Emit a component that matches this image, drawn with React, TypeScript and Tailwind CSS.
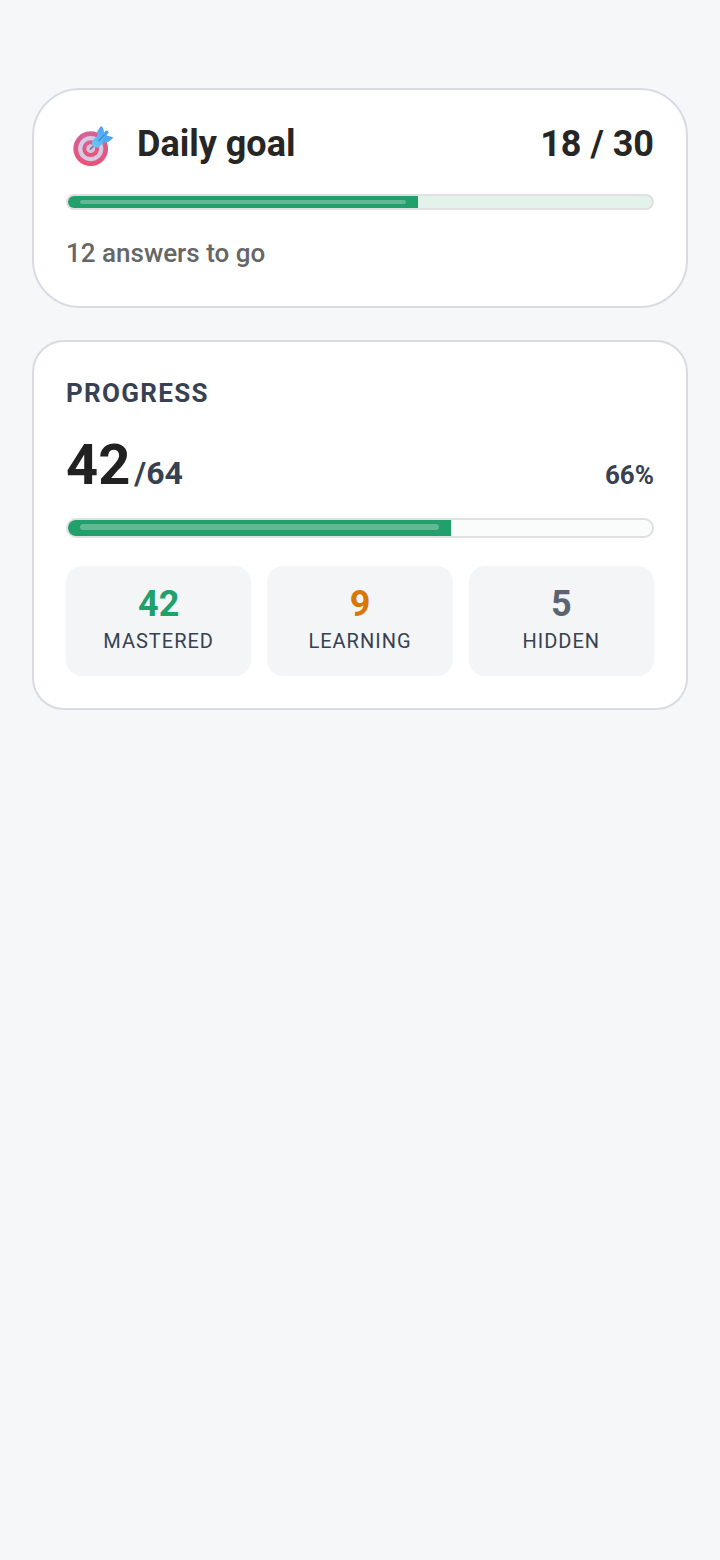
function TargetIcon() {
  return (
    <svg viewBox="0 0 40 40" className="size-10" aria-hidden="true">
      <defs>
        <linearGradient id="ring" x1="0" y1="0" x2="0" y2="1">
          <stop offset="0" stopColor="#d4629a" />
          <stop offset="1" stopColor="#ea5276" />
        </linearGradient>
        <linearGradient id="dart" x1="1" y1="0" x2="0" y2="1">
          <stop offset="0" stopColor="#3f8ff0" />
          <stop offset="1" stopColor="#6ccdf3" />
        </linearGradient>
      </defs>
      <circle cx="17.7" cy="22.7" r="17.4" fill="url(#ring)" />
      <circle cx="17.7" cy="22.7" r="12.6" fill="#d5cbe3" />
      <circle cx="17.7" cy="22.7" r="8.4" fill="url(#ring)" />
      <circle cx="17.7" cy="22.7" r="4.4" fill="#d3c3dc" />
      <path d="M17.5 22.8 21.5 19" stroke="#85799a" strokeWidth="1.8" strokeLinecap="round" />
      <path
        d="M20 14 24.4 9.8 24.2 5.4 27.6.6Q28.6-.3 29.4.9L30.8 4.6 30.8 6.8 32.8 4.8Q34.2 4 35.2 5.2 36 6.4 35 7.6L33.6 9.4 39.2 11Q40.4 11.7 39.4 12.8L35 16.2 30.8 16.4 26.8 20.2Q23.5 22.6 20.5 20.4 17.8 17.2 20 14Z"
        fill="url(#dart)"
      />
      <path d="M25.8 14.6 31.2 9.2" stroke="#3683d8" strokeWidth="1.2" strokeLinecap="round" />
      <path d="M29.6 16.2 33.4 12.2" stroke="#4598e8" strokeWidth="0.9" />
    </svg>
  );
}

type BarProps = { label: string; value: number; max: number; size: "sm" | "md" };

function ProgressBar({ label, value, max, size }: BarProps) {
  const small = size === "sm";
  return (
    <div
      role="progressbar"
      aria-label={label}
      aria-valuenow={value}
      aria-valuemin={0}
      aria-valuemax={max}
      className={`overflow-hidden rounded-full border-2 border-[#e0e0e0] ${
        small ? "h-4 bg-[#e4f2ec]" : "h-5 bg-[#fafcfb]"
      }`}
    >
      <div className="h-full bg-[#22a06b] px-3 pt-1" style={{ width: `${(value / max) * 100}%` }}>
        <div className={`rounded-full bg-[#62b894] ${small ? "h-1" : "h-1.5"}`} />
      </div>
    </div>
  );
}

const stats = [
  { label: "MASTERED", value: 42, color: "text-[#22a06b]" },
  { label: "LEARNING", value: 9, color: "text-[#d97706]" },
  { label: "HIDDEN", value: 5, color: "text-[#5b6472]" },
];

export default function App() {
  return (
    <main className="flex min-h-screen flex-col gap-8 bg-[#f6f7f9] px-8 pt-[88px] pb-8 font-[Roboto,sans-serif] text-[#262626]">
      <section className="rounded-[48px] border-2 border-[#d9dbe3] bg-white p-8">
        <div className="flex items-center justify-between">
          <div className="flex items-center gap-[17px]">
            <span className="flex w-[54px] justify-center pt-1">
              <TargetIcon />
            </span>
            <h2 className="text-4xl/11 font-bold">Daily goal</h2>
          </div>
          <p className="text-4xl/11 font-bold">18 / 30</p>
        </div>
        <div className="mt-7">
          <ProgressBar label="Daily goal" value={18} max={30} size="sm" />
        </div>
        <p className="mt-6 pb-0.5 text-[26px]/[38px] font-medium text-[#666666]">12 answers to go</p>
      </section>

      <section className="rounded-4xl border-2 border-[#d9dbe3] bg-white p-8">
        <h2 className="text-[26px]/[38px] font-bold tracking-[1.3px] text-[#374151]">PROGRESS</h2>
        <div className="mt-6 flex items-baseline justify-between text-[#374151]">
          <p className="flex items-baseline gap-1">
            <span className="text-[56px]/[58px] font-bold text-[#212121]">42</span>
            <span className="text-[32px]/10 font-bold">/64</span>
          </p>
          <p className="text-[26px]/9 font-bold">66%</p>
        </div>
        <div className="mt-6">
          <ProgressBar label="Progress" value={42} max={64} size="md" />
        </div>
        <dl className="mt-7 grid grid-cols-3 gap-4">
          {stats.map((s) => (
            <div key={s.label} className="flex flex-col-reverse rounded-2xl bg-[#f3f5f7] pt-4 pb-5 text-center">
              <dt className="text-xl/[30px] tracking-[1px] text-[#374151]">{s.label}</dt>
              <dd className={`text-4xl/11 font-bold ${s.color}`}>{s.value}</dd>
            </div>
          ))}
        </dl>
      </section>
    </main>
  );
}
